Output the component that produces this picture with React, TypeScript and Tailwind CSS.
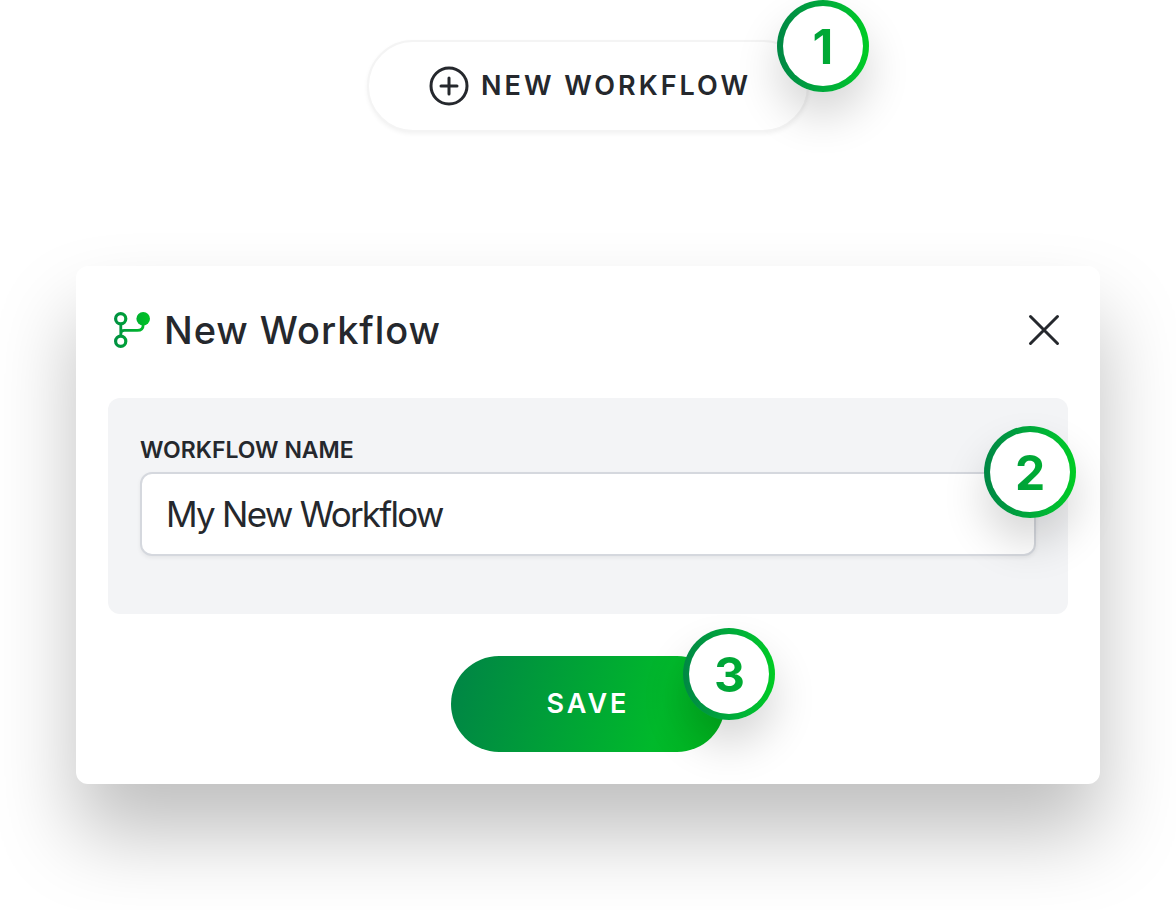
import { useState } from 'react';
import type { ReactNode } from 'react';

interface StepBadgeProps {
  step: number;
  className: string;
}

function StepBadge({ step, className }: StepBadgeProps) {
  return (
    <span
      className={`absolute size-[92px] rounded-full bg-linear-to-r from-[#008744] to-[#00cc22] p-1.5 shadow-[0_24px_44px_rgba(0,0,0,0.16)] ${className}`}
    >
      <span className="flex size-full items-center justify-center rounded-full bg-white pt-0.5">
        <span className="bg-linear-to-r from-[#00a03a] to-[#00ae31] bg-clip-text text-5xl font-bold text-transparent">
          {step}
        </span>
      </span>
    </span>
  );
}

function PlusCircleIcon() {
  return (
    <svg className="size-10" viewBox="0 0 40 40" fill="none" stroke="currentColor" strokeWidth="3" strokeLinecap="round" aria-hidden="true">
      <circle cx="20" cy="20" r="18" />
      <path d="M20 12v16M12 20h16" />
    </svg>
  );
}

function BranchIcon() {
  return (
    <svg className="size-9" viewBox="0 0 36 36" fill="none" aria-hidden="true">
      <defs>
        <linearGradient id="branch" gradientUnits="userSpaceOnUse" x1="0" y1="18" x2="36" y2="18">
          <stop stopColor="#008f42" />
          <stop offset="1" stopColor="#00c424" />
        </linearGradient>
      </defs>
      <g stroke="url(#branch)" strokeWidth="3.2">
        <circle cx="6.7" cy="6.7" r="5.1" />
        <circle cx="6.7" cy="29.3" r="5.1" />
        <path d="M6.8 12v12M6.8 22c0-2.400 1-3.600 3.500-3.600h13c3.600 0 5.900-2 5.900-6" strokeWidth="2.8" />
      </g>
      <circle cx="29.200" cy="6.800" r="6.800" fill="url(#branch)" />
    </svg>
  );
}

function CloseIcon() {
  return (
    <svg className="size-8" viewBox="0 0 32 32" fill="none" stroke="currentColor" strokeWidth="3" strokeLinecap="round" aria-hidden="true">
      <path d="M2.500 2.500l27 27M29.500 2.500L2.500 29.500" />
    </svg>
  );
}

function Marked({ children }: { children: ReactNode }) {
  return <div className="relative">{children}</div>;
}

export default function App() {
  const [name, setName] = useState('My New Workflow');

  return (
    <main className="flex flex-col items-center overflow-hidden px-[76px] pt-10 pb-[126px] font-['Inter',sans-serif] text-[#25282d]">
      <Marked>
        <button
          type="button"
          className="flex h-[92px] items-center gap-3 rounded-full border-2 border-[#f4f4f4] bg-white pr-14 pl-15 text-[27px] font-semibold tracking-[3px] shadow-[0_2px_4px_rgba(0,0,0,0.05)]"
        >
          <PlusCircleIcon />
          NEW WORKFLOW
        </button>
        <StepBadge step={1} className="-top-10 -right-15" />
      </Marked>

      <section
        aria-labelledby="dialog-title"
        className="mt-[134px] w-full rounded-xl bg-white p-8 shadow-[0_50px_80px_rgba(0,0,0,0.25)]"
      >
        <header className="flex h-16 items-center justify-between pr-2 pl-1.5">
          <div className="flex items-center gap-3.5">
            <BranchIcon />
            <h1 id="dialog-title" className="text-[38px] font-medium tracking-wide">
              New Workflow
            </h1>
          </div>
          <button type="button" aria-label="Close">
            <CloseIcon />
          </button>
        </header>

        <div className="mt-9 rounded-xl bg-[#f3f4f6] px-8 pt-9 pb-[58px]">
          <label htmlFor="workflow-name" className="block text-[23px] leading-8 font-semibold">
            WORKFLOW NAME
          </label>
          <div className="relative mt-1.5">
            <input
              id="workflow-name"
              type="text"
              value={name}
              onChange={(e) => setName(e.target.value)}
              className="block h-[84px] w-full rounded-xl border-2 border-[#d5d8de] bg-white px-6 text-[35px] tracking-tighter shadow-[0_2px_4px_rgba(0,0,0,0.06)] outline-none"
            />
            <StepBadge step={2} className="-top-[46px] -right-10" />
          </div>
        </div>

        <div className="mt-[42px] flex justify-center">
          <Marked>
            <button
              type="button"
              className="h-24 rounded-full bg-linear-[105deg] from-[#008744] from-5% via-[#00b92b] via-75% to-[#00b41c] px-24 text-[27px] font-semibold tracking-[3px] text-white"
            >
              SAVE
            </button>
            <StepBadge step={3} className="-top-7 -right-[50px]" />
          </Marked>
        </div>
      </section>
    </main>
  );
}
